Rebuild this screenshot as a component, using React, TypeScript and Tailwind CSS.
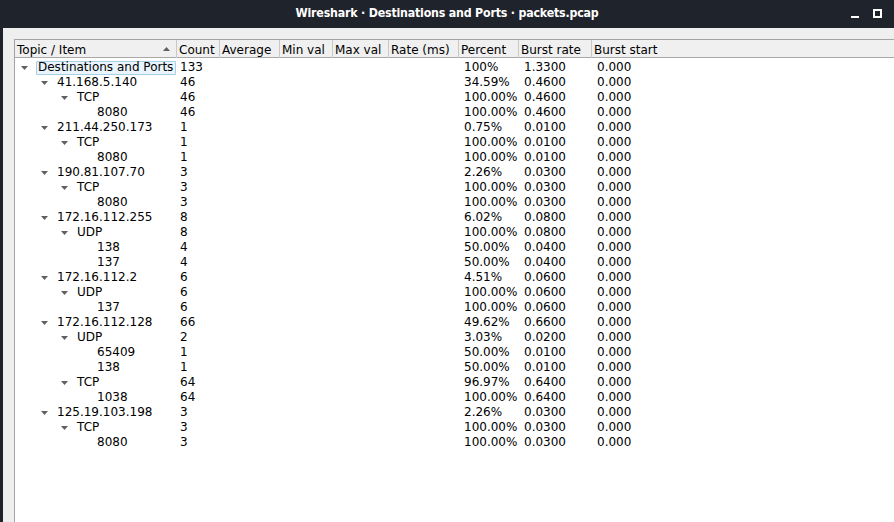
import React from "react";

type Row = { name: string; level: number; expandable: boolean; count: string; pct: string; rate: string };

const rows: Row[] = [
  { name: "Destinations and Ports", level: 0, expandable: true, count: "133", pct: "100%", rate: "1.3300" },
  { name: "41.168.5.140", level: 1, expandable: true, count: "46", pct: "34.59%", rate: "0.4600" },
  { name: "TCP", level: 2, expandable: true, count: "46", pct: "100.00%", rate: "0.4600" },
  { name: "8080", level: 3, expandable: false, count: "46", pct: "100.00%", rate: "0.4600" },
  { name: "211.44.250.173", level: 1, expandable: true, count: "1", pct: "0.75%", rate: "0.0100" },
  { name: "TCP", level: 2, expandable: true, count: "1", pct: "100.00%", rate: "0.0100" },
  { name: "8080", level: 3, expandable: false, count: "1", pct: "100.00%", rate: "0.0100" },
  { name: "190.81.107.70", level: 1, expandable: true, count: "3", pct: "2.26%", rate: "0.0300" },
  { name: "TCP", level: 2, expandable: true, count: "3", pct: "100.00%", rate: "0.0300" },
  { name: "8080", level: 3, expandable: false, count: "3", pct: "100.00%", rate: "0.0300" },
  { name: "172.16.112.255", level: 1, expandable: true, count: "8", pct: "6.02%", rate: "0.0800" },
  { name: "UDP", level: 2, expandable: true, count: "8", pct: "100.00%", rate: "0.0800" },
  { name: "138", level: 3, expandable: false, count: "4", pct: "50.00%", rate: "0.0400" },
  { name: "137", level: 3, expandable: false, count: "4", pct: "50.00%", rate: "0.0400" },
  { name: "172.16.112.2", level: 1, expandable: true, count: "6", pct: "4.51%", rate: "0.0600" },
  { name: "UDP", level: 2, expandable: true, count: "6", pct: "100.00%", rate: "0.0600" },
  { name: "137", level: 3, expandable: false, count: "6", pct: "100.00%", rate: "0.0600" },
  { name: "172.16.112.128", level: 1, expandable: true, count: "66", pct: "49.62%", rate: "0.6600" },
  { name: "UDP", level: 2, expandable: true, count: "2", pct: "3.03%", rate: "0.0200" },
  { name: "65409", level: 3, expandable: false, count: "1", pct: "50.00%", rate: "0.0100" },
  { name: "138", level: 3, expandable: false, count: "1", pct: "50.00%", rate: "0.0100" },
  { name: "TCP", level: 2, expandable: true, count: "64", pct: "96.97%", rate: "0.6400" },
  { name: "1038", level: 3, expandable: false, count: "64", pct: "100.00%", rate: "0.6400" },
  { name: "125.19.103.198", level: 1, expandable: true, count: "3", pct: "2.26%", rate: "0.0300" },
  { name: "TCP", level: 2, expandable: true, count: "3", pct: "100.00%", rate: "0.0300" },
  { name: "8080", level: 3, expandable: false, count: "3", pct: "100.00%", rate: "0.0300" },
];

const grid = "grid grid-cols-[162px_43px_60px_53px_56px_70px_60px_73px_1fr]";

const indents = ["pl-[21px]", "pl-[42px]", "pl-[62px]", "pl-[82px]"];

function Arrow() {
  return (
    <svg width="7" height="4" viewBox="0 0 7 4" className="shrink-0">
      <polygon points="0,0 7,0 3.5,4" fill="#606060" />
    </svg>
  );
}

export default function App() {
  const headers = ["Count", "Average", "Min val", "Max val", "Rate (ms)", "Percent", "Burst rate", "Burst start"];
  return (
    <div
      className="w-[894px] h-[522px] bg-[#1f232b] flex flex-col overflow-hidden text-black"
      style={{ fontFamily: '"DejaVu Sans", sans-serif' }}
    >
      <div className="h-[28px] shrink-0 relative flex items-center justify-center">
        <span
          className="text-white text-[12.3px] font-bold tracking-[-0.2px] mt-[-1px]"
          style={{ fontFamily: '"DejaVu Sans Condensed", "DejaVu Sans", sans-serif' }}
        >
          Wireshark · Destinations and Ports · packets.pcap
        </span>
        <div className="absolute right-[12px] top-[9px] flex items-end gap-[14px]">
          <div className="w-[8px] h-[2px] bg-white mt-[7px]" />
          <div className="w-[9px] h-[9px] border-[2px] border-white" />
        </div>
      </div>
      <div className="flex-1 ml-[3px] bg-[#efefef] pl-[11px] pt-[11px] min-h-0">
        <div className="h-full border-l border-t border-[#a3a3a3] bg-white text-[12px] leading-[15px]">
          <div className={`${grid} h-[18px] bg-[#f0f0f0] border-b border-[#a8a8a8]`}>
            <div className="relative border-r border-[#c8c8c8] pl-[2px] pt-[3px]">
              Topic / Item
              <svg width="7" height="4" viewBox="0 0 7 4" className="absolute right-[6px] top-[7px]">
                <polygon points="0,4 7,4 3.5,0" fill="#606060" />
              </svg>
            </div>
            {headers.map((h, i) => (
              <div
                key={h}
                className={`pl-[2px] pt-[3px] whitespace-nowrap ${i < headers.length - 1 ? "border-r border-[#c8c8c8]" : ""}`}
              >
                {h}
              </div>
            ))}
          </div>
          <div className="pt-[2px]">
            {rows.map((r, i) => (
              <div key={i} className={`${grid} h-[15px] whitespace-nowrap`}>
                <div className={`relative flex items-center ${indents[r.level]}`}>
                  {r.expandable && (
                    <span className="absolute top-[6px]" style={{ left: 6 + r.level * 20 }}>
                      <Arrow />
                    </span>
                  )}
                  {i === 0 ? (
                    <span className="flex-1 mr-[1px] pl-[1px] h-[14px] flex items-center border border-[#a8cfe8] bg-[#eaf4fc] rounded-[1px]">
                      {r.name}
                    </span>
                  ) : (
                    <span>{r.name}</span>
                  )}
                </div>
                <div className="pl-[3px]">{r.count}</div>
                <div />
                <div />
                <div />
                <div />
                <div className="pl-[5px]">{r.pct}</div>
                <div className="pl-[5px]">{r.rate}</div>
                <div className="pl-[5px]">0.000</div>
              </div>
            ))}
          </div>
        </div>
      </div>
    </div>
  );
}
